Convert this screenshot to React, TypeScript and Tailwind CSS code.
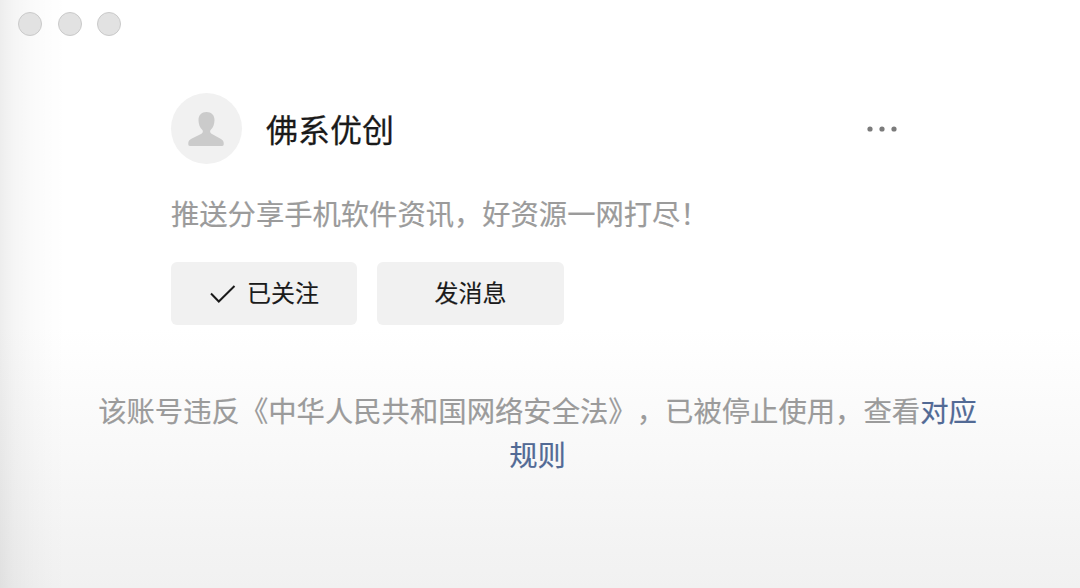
const windowControls = ["close", "minimize", "zoom"];

function Avatar() {
  return (
    <div className="flex size-[71px] items-center justify-center rounded-full bg-[#f1f1f1]">
      <svg width="36" height="36" viewBox="0 0 36 36" fill="#cbcbcb" className="mr-px" aria-hidden="true">
        <path d="M18.500 1c-4.900 0-8 3.200-8 8 0 3.900 1.200 7.300 3.500 9.600 1.300 1.300 1.200 3.100-.5 4.100L3.900 27.400C1.400 28.600.3 30 .3 32v1.300c0 1.200.5 1.600 1.600 1.600h32.200c1.100 0 1.600-.4 1.600-1.600V32c0-2-1.100-3.400-3.600-4.600l-8.600-4.700c-1.700-1-1.800-2.800-.5-4.100 2.300-2.300 3.500-5.700 3.500-9.600 0-4.800-3.100-8-8-8z" />
      </svg>
    </div>
  );
}

export default function App() {
  return (
    <div className="h-[588px] w-[1080px] overflow-hidden bg-linear-to-b from-white from-[56%] to-[#f1f1f1] font-['Noto_Sans_CJK_SC',sans-serif] [text-spacing-trim:space-all]">
      <div className="h-full bg-[linear-gradient(to_right,rgba(0,0,0,0.07),rgba(0,0,0,0.04)_14px,rgba(0,0,0,0.018)_32px,rgba(0,0,0,0.006)_48px,transparent_66px)]">
        <header className="flex gap-[15.7px] pt-3 pl-[18px]">
          {windowControls.map((control) => (
            <span key={control} className="size-6 rounded-full border border-[#cacaca] bg-[#e2e2e2]" />
          ))}
        </header>

        <main className="pt-[57px]">
          <section className="pr-[182px] pl-[171px]">
            <div className="flex h-[71px] items-center">
              <Avatar />
              <h1 className="mb-[2px] ml-6 text-[32px] leading-[44px] text-[#1a1a1a] [-webkit-text-stroke:0.25px]">佛系优创</h1>
              <button type="button" aria-label="更多" className="ml-auto">
                <svg width="32" height="8" viewBox="0 0 32 8" fill="#7b7b7b">
                  <circle cx="4" cy="4" r="2.600" />
                  <circle cx="16" cy="4" r="2.600" />
                  <circle cx="28" cy="4" r="2.600" />
                </svg>
              </button>
            </div>

            <p className="mt-[27px] text-[28.3px] leading-[44px] text-[#9b9b9b] [-webkit-text-stroke:0.2px]">
              推送分享手机软件资讯，好资源一网打尽！
            </p>

            <div className="mt-[27px] flex gap-5 text-2xl text-[#1a1a1a] [-webkit-text-stroke:0.15px]">
              <button type="button" className="flex h-[63px] w-[186px] items-center justify-center gap-3 rounded-md bg-[#f1f1f1]">
                <svg width="26" height="18" viewBox="0 0 26 18" fill="none" stroke="currentColor" strokeWidth="2" className="relative left-px" aria-hidden="true">
                  <path d="M1 8.500 8.800 16.500 24.500 1" />
                </svg>
                <span className="pb-[3px]">已关注</span>
              </button>
              <button type="button" className="h-[63px] w-[187px] rounded-md bg-[#f1f1f1] pb-[3px]">发消息</button>
            </div>
          </section>

          <p className="mt-[63px] ml-[97px] w-[881px] text-center text-[28.35px] leading-[44px] text-[#9b9b9b] [-webkit-text-stroke:0.2px]">
            该账号违反《中华人民共和国网络安全法》，已被停止使用，查看<a className="text-[#526a95]">对应规则</a>
          </p>
        </main>
      </div>
    </div>
  );
}
